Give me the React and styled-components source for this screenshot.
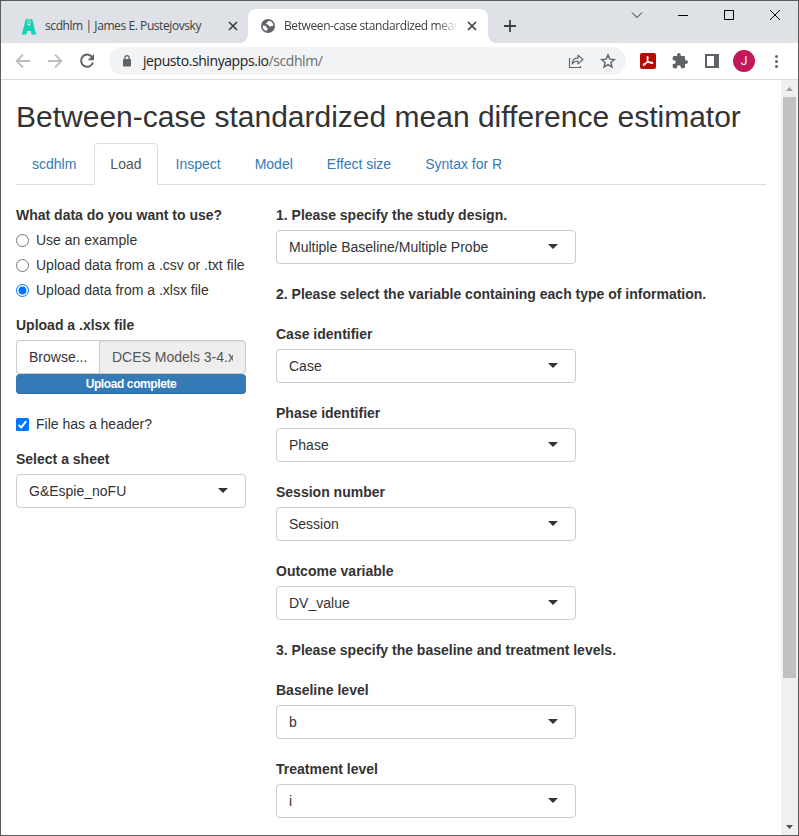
import React from 'react';
import styled, { createGlobalStyle } from 'styled-components';

const GlobalStyle = createGlobalStyle`
  *, *::before, *::after { box-sizing: border-box; }
  body { margin: 0; overflow: hidden; }
`;

const Window = styled.div`
  display: flex;
  flex-direction: column;
  width: 799px;
  height: 836px;
  border: 1px solid #5c5a5c;
  background: #fff;
  overflow: hidden;
  color: #333;
  font: 14px/20px "Liberation Sans", Arial, sans-serif;
`;

const Glyph = styled.svg`
  display: block;
  flex: none;
`;

/* Browser chrome */

const TabStrip = styled.div`
  display: flex;
  flex: none;
  height: 42px;
  background: #dee1e6;
`;

const BrowserTab = styled.div`
  position: relative;
  display: flex;
  align-items: center;
  width: ${(p) => (p.$active ? 240 : 247)}px;
  height: ${(p) => (p.$active ? 34 : 42)}px;
  margin-top: ${(p) => (p.$active ? 8 : 0)}px;
  padding: ${(p) => (p.$active ? '0 11px 0 13px' : '8px 10px 0 20px')};
  background: ${(p) => (p.$active ? '#fff' : 'transparent')};
  border-radius: 8px 8px 0 0;

  &::before, &::after {
    content: ${(p) => (p.$active ? '""' : 'none')};
    position: absolute;
    bottom: 0;
    width: 8px;
    height: 8px;
  }
  &::before {
    left: -8px;
    background: radial-gradient(circle at 0 0, transparent 7.5px, #fff 8px);
  }
  &::after {
    right: -8px;
    background: radial-gradient(circle at 100% 0, transparent 7.5px, #fff 8px);
  }
`;

const TabTitle = styled.span`
  width: ${(p) => p.$width}px;
  margin-left: ${(p) => p.$gap}px;
  margin-right: auto;
  overflow: hidden;
  white-space: nowrap;
  color: #3c4043;
  font: 12px/16px "Open Sans", "Noto Sans", sans-serif;
  letter-spacing: ${(p) => p.$tracking}px;
  mask-image: ${(p) => (p.$fade ? 'linear-gradient(90deg, #000 88%, transparent)' : 'none')};
`;

const NewTab = styled.div`
  padding: 19px 0 0 16px;
`;

const WindowControls = styled.div`
  display: flex;
  margin-left: auto;
`;

const WindowButton = styled.div`
  display: flex;
  justify-content: center;
  width: 46px;
  height: 28px;
  align-items: center;
`;

const Toolbar = styled.div`
  display: flex;
  align-items: center;
  flex: none;
  height: 37px;
  padding: 0 13px 0 14px;
  border-bottom: 1px solid #dadbdd;
`;

const NavButtons = styled.div`
  display: flex;
  gap: 16px;
  margin-right: 14px;
`;

const AddressBar = styled.div`
  display: flex;
  align-items: center;
  width: 517px;
  height: 28px;
  padding: 0 10px 0 13px;
  border-radius: 14px;
  background: #f1f3f4;
`;

const Url = styled.span`
  flex: 1;
  margin-left: 11px;
  color: #202124;
  white-space: nowrap;
  font: 14px/20px "Open Sans", "Noto Sans", sans-serif;
  letter-spacing: -0.42px;
`;

const UrlPath = styled.span`
  color: #6a6e72;
`;

const AddressActions = styled.div`
  display: flex;
  gap: 16px;
`;

const Extensions = styled.div`
  display: flex;
  align-items: center;
  gap: 16px;
  margin-left: 14px;
`;

const PdfBadge = styled.div`
  width: 16px;
  height: 16px;
  border-radius: 2px;
  background: #b30b00;
`;

const Avatar = styled.div`
  width: 22px;
  height: 22px;
  margin: 0 -3px;
  border-radius: 50%;
  background: #c2185b;
  color: #fff;
  text-align: center;
  font: 12px/22px Roboto, sans-serif;
`;

/* Page */

const Viewport = styled.div`
  display: flex;
  flex: 1;
  min-height: 0;
`;

const Page = styled.main`
  flex: 1;
  min-width: 0;
  padding: 20px 15px 0;
`;

const Title = styled.h2`
  margin: 0 0 10px;
  white-space: nowrap;
  font-size: 30px;
  font-weight: 400;
  line-height: 33px;
`;

const NavTabs = styled.nav`
  display: flex;
  gap: 2px;
  height: 42px;
  border-bottom: 1px solid #ddd;
`;

const NavTab = styled.a`
  height: 42px;
  padding: 10px 15px;
  border: 1px solid ${(p) => (p.$active ? '#ddd' : 'transparent')};
  border-bottom-color: ${(p) => (p.$active ? '#fff' : 'transparent')};
  border-radius: 4px 4px 0 0;
  color: ${(p) => (p.$active ? '#555' : '#337ab7')};
`;

const Columns = styled.div`
  display: grid;
  grid-template-columns: 230px 300px;
  column-gap: 30px;
  padding-top: 20px;
`;

const Sidebar = styled.div`
  display: flex;
  flex-direction: column;
  gap: 15px;
`;

const MainForm = styled.div`
  display: flex;
  flex-direction: column;
  gap: 20px;
`;

const Field = styled.div`
  display: flex;
  flex-direction: column;
  gap: 5px;
`;

const Label = styled.div`
  height: 20px;
  white-space: nowrap;
  font-weight: 700;
`;

const Choice = styled.label`
  display: flex;
  align-items: center;
  height: 20px;
  white-space: nowrap;
`;

const ChoiceMark = styled(Glyph)`
  margin: 1px 7px 0 0;
`;

const HeaderChoice = styled(Choice)`
  margin-top: 5px;
`;

const FileRow = styled.div`
  display: flex;
  height: 34px;
`;

const BrowseButton = styled.div`
  width: 83px;
  padding: 6px 12px;
  border: 1px solid #ccc;
  border-right-width: 0;
  border-radius: 4px 0 0 4px;
  white-space: nowrap;
`;

const FileName = styled.div`
  flex: 1;
  min-width: 0;
  padding: 6px 12px;
  border: 1px solid #ccc;
  border-radius: 0 4px 4px 0;
  background: #eee;
  box-shadow: inset 0 1px 1px rgba(0, 0, 0, 0.075);
  color: #555;
`;

const FileNameText = styled.div`
  overflow: hidden;
  white-space: nowrap;
`;

const Progress = styled.div`
  height: 20px;
  border-radius: 4px;
  background: #337ab7;
  box-shadow: inset 0 -1px 0 rgba(0, 0, 0, 0.15);
  color: #fff;
  text-align: center;
  font-size: 12px;
  font-weight: 700;
  letter-spacing: -0.4px;
`;

const SelectBox = styled.div`
  display: flex;
  align-items: center;
  justify-content: space-between;
  height: 34px;
  padding: 0 17px 0 12px;
  border: 1px solid #ccc;
  border-radius: 4px;
`;

const Caret = styled(Glyph)`
  margin-bottom: 2px;
`;

/* Scrollbar */

const Scrollbar = styled.div`
  display: flex;
  flex-direction: column;
  align-items: center;
  width: 17px;
  padding-right: 1px;
  background: #f0f0f0;
`;

const ScrollArrow = styled.div`
  display: flex;
  align-items: center;
  justify-content: center;
  height: 17px;
`;

const ScrollThumb = styled.div`
  width: 13px;
  height: 581px;
  margin-bottom: auto;
  background: #c1c1c1;
`;

const CloseIcon = () => (
  <Glyph width="10" height="10" viewBox="0 0 10 10" stroke="#3c4043" strokeWidth="1.7">
    <path d="M1 1l8 8M9 1L1 9" />
  </Glyph>
);

const SiteLogo = () => (
  <Glyph width="16" height="17" viewBox="0 0 16 17" fill="#12d3b4">
    <path d="M4.8 1h1.7v5.4L8 8l1.5-1.6V1h1.7l4 15.4h-4.6L9.7 13H6.3l-.9 3.4H.8z" />
    <path d="M7.3 1h1.4v5H7.3z" />
  </Glyph>
);

const GlobeIcon = () => (
  <Glyph width="14" height="14" viewBox="0 0 14 14">
    <circle cx="7" cy="7" r="7" fill="#5f6368" />
    <path
      fill="#fff"
      d="M7.8 1.7c-.2.8-.8 1.1-1.5 1.3-.5.2-.4.8-.9 1.2-.5.3-.6.8-.1 1.1.6.3 1.8 0 2.2.7.3.6 0 1 .7 1.3.8.4 1.5 0 2.3-.4.7-.3 1.5-.2 1.9.4a5.3 5.3 0 0 0-4.6-5.6zM1.7 6.6c.9-.1 2.4.1 3.2.7.7.5.5 1.4 1.2 1.6.7.2.9.7.6 1.3-.3.5-1 .6-1.1 1.2v.8A5.3 5.3 0 0 1 1.7 6.6z"
    />
  </Glyph>
);

const ArrowIcon = ({ forward }) => (
  <Glyph width="16" height="16" viewBox="0 0 16 16" fill="none" stroke="#babcbe" strokeWidth="1.9">
    <path d={forward ? 'M1 8h13M8 1.6L14.3 8 8 14.4' : 'M15 8H2M8 1.6L1.7 8 8 14.4'} />
  </Glyph>
);

const ReloadIcon = () => (
  <Glyph width="16" height="16" viewBox="0 0 16 16">
    <path d="M13.2 4.2A6.1 6.1 0 1 0 14 9.5" fill="none" stroke="#5f6368" strokeWidth="2" />
    <path d="M15 1v6.3H8.7z" fill="#5f6368" />
  </Glyph>
);

const LockIcon = () => (
  <Glyph width="10" height="13" viewBox="0 0 10 13">
    <rect x="1" y="4" width="8" height="7.5" rx="1" fill="#5f6368" />
    <path d="M2.9 4.5V2.7a2.1 2.1 0 0 1 4.2 0v1.8" fill="none" stroke="#5f6368" strokeWidth="1.2" />
  </Glyph>
);

const ShareIcon = () => (
  <Glyph width="16" height="16" viewBox="0 0 16 16" fill="none" stroke="#5f6368" strokeWidth="1.1">
    <path d="M1.5 5v9.5h11V13" />
    <path d="M4.2 10.9C4.4 7.3 6.6 5.2 10 4.9V2.1L15 6.5l-5 4.3V8c-2.5 0-4.3.8-5.8 2.9z" strokeLinejoin="round" />
  </Glyph>
);

const StarIcon = () => (
  <Glyph width="16" height="16" viewBox="0 0 16 16" fill="none" stroke="#5f6368" strokeWidth="1.4">
    <path d="M8 1.9l1.8 4.2 4.6.4-3.5 3 1.1 4.5L8 11.6 4 14l1.1-4.5-3.5-3 4.6-.4z" />
  </Glyph>
);

const AcrobatMark = () => (
  <Glyph width="16" height="16" viewBox="0 0 16 16" fill="none" stroke="#fff" strokeWidth="1.15">
    <path d="M3.4 12.1c-.7-.7.7-1.7 2.2-2.1 2-.6 4.3-1 6.2-.8 1.2.1 1.3 1.3.2 1.2-1.8-.2-4.2-2-4.7-4.6-.3-1.3-.2-2.3.3-2.3.8 0 .5 2-.1 3.7-.7 2.1-2.9 6-4.1 4.9z" />
  </Glyph>
);

const PuzzleIcon = () => (
  <Glyph width="16" height="16" viewBox="1 1 22 22" fill="#5f6368">
    <path d="M20.5 11H19V7c0-1.1-.9-2-2-2h-4V3.5a2.5 2.5 0 0 0-5 0V5H4c-1.1 0-2 .9-2 2v3.8h1.5a2.7 2.7 0 0 1 0 5.4H2V20c0 1.1.9 2 2 2h3.8v-1.5a2.7 2.7 0 0 1 5.4 0V22H17c1.1 0 2-.9 2-2v-4h1.5a2.5 2.5 0 0 0 0-5z" />
  </Glyph>
);

const SidePanelIcon = () => (
  <Glyph width="16" height="16" viewBox="0 0 16 16">
    <path d="M1 1h14v14H1zM3 3v10h7V3z" fill="#5f6368" fillRule="evenodd" />
  </Glyph>
);

const MenuIcon = () => (
  <Glyph width="16" height="16" viewBox="0 0 16 16" fill="#5f6368">
    <circle cx="8.5" cy="3.5" r="1.5" />
    <circle cx="8.5" cy="8.5" r="1.5" />
    <circle cx="8.5" cy="13.5" r="1.5" />
  </Glyph>
);

const RadioMark = ({ checked }) => (
  <ChoiceMark width="13" height="13" viewBox="0 0 13 13">
    <circle cx="6.5" cy="6.5" r="6" fill="#fff" stroke={checked ? '#0075ff' : '#767676'} />
    {checked && <circle cx="6.5" cy="6.5" r="4" fill="#0075ff" />}
  </ChoiceMark>
);

const CheckMark = () => (
  <ChoiceMark width="13" height="13" viewBox="0 0 13 13">
    <rect width="13" height="13" rx="1.5" fill="#0075ff" />
    <path d="M2.6 6.9l2.6 2.6 5-6.3" fill="none" stroke="#fff" strokeWidth="2" />
  </ChoiceMark>
);

const Select = ({ label, value }) => (
  <Field>
    <Label>{label}</Label>
    <SelectBox>
      {value}
      <Caret width="10" height="5" viewBox="0 0 10 5" fill="#333">
        <path d="M0 0h10L5 5z" />
      </Caret>
    </SelectBox>
  </Field>
);

const pageTabs = ['scdhlm', 'Load', 'Inspect', 'Model', 'Effect size', 'Syntax for R'];
const sources = ['Use an example', 'Upload data from a .csv or .txt file', 'Upload data from a .xlsx file'];
const variables = [
  ['Case identifier', 'Case'],
  ['Phase identifier', 'Phase'],
  ['Session number', 'Session'],
  ['Outcome variable', 'DV_value'],
];

export default function App() {
  return (
    <Window>
      <GlobalStyle />
      <TabStrip>
        <BrowserTab>
          <SiteLogo />
          <TabTitle $width={170} $gap={8} $tracking={-0.42}>scdhlm | James E. Pustejovsky</TabTitle>
          <CloseIcon />
        </BrowserTab>
        <BrowserTab $active>
          <GlobeIcon />
          <TabTitle $width={174} $gap={9} $tracking={-0.4} $fade>Between-case standardized mean difference</TabTitle>
          <CloseIcon />
        </BrowserTab>
        <NewTab>
          <Glyph width="12" height="12" viewBox="0 0 12 12" stroke="#3c4043" strokeWidth="1.8">
            <path d="M6 0v12M0 6h12" />
          </Glyph>
        </NewTab>
        <WindowControls>
          <WindowButton>
            <Glyph width="12" height="8" viewBox="0 0 12 8" fill="none" stroke="#222">
              <path d="M1 1.5l5 5 5-5" />
            </Glyph>
          </WindowButton>
          <WindowButton>
            <Glyph width="10" height="2" viewBox="0 0 10 2">
              <path d="M0 1h10v1H0z" />
            </Glyph>
          </WindowButton>
          <WindowButton>
            <Glyph width="10" height="10" viewBox="0 0 10 10" fill="none" stroke="#000">
              <path d="M.5.5h9v9h-9z" />
            </Glyph>
          </WindowButton>
          <WindowButton>
            <Glyph width="10" height="10" viewBox="0 0 10 10" stroke="#000">
              <path d="M0 0l10 10M10 0L0 10" />
            </Glyph>
          </WindowButton>
        </WindowControls>
      </TabStrip>

      <Toolbar>
        <NavButtons>
          <ArrowIcon />
          <ArrowIcon forward />
          <ReloadIcon />
        </NavButtons>
        <AddressBar>
          <LockIcon />
          <Url>jepusto.shinyapps.io<UrlPath>/scdhlm/</UrlPath></Url>
          <AddressActions>
            <ShareIcon />
            <StarIcon />
          </AddressActions>
        </AddressBar>
        <Extensions>
          <PdfBadge><AcrobatMark /></PdfBadge>
          <PuzzleIcon />
          <SidePanelIcon />
          <Avatar>J</Avatar>
          <MenuIcon />
        </Extensions>
      </Toolbar>

      <Viewport>
        <Page>
          <Title>Between-case standardized mean difference estimator</Title>
          <NavTabs>
            {pageTabs.map((t) => <NavTab key={t} $active={t === 'Load'}>{t}</NavTab>)}
          </NavTabs>
          <Columns>
            <Sidebar>
              <Field>
                <Label>What data do you want to use?</Label>
                {sources.map((s, i) => (
                  <Choice key={s}><RadioMark checked={i === 2} />{s}</Choice>
                ))}
              </Field>
              <Field>
                <Label>Upload a .xlsx file</Label>
                <div>
                  <FileRow>
                    <BrowseButton>Browse...</BrowseButton>
                    <FileName><FileNameText>DCES Models 3-4.xlsx</FileNameText></FileName>
                  </FileRow>
                  <Progress>Upload complete</Progress>
                </div>
              </Field>
              <HeaderChoice><CheckMark />File has a header?</HeaderChoice>
              <Select label="Select a sheet" value="G&amp;Espie_noFU" />
            </Sidebar>
            <MainForm>
              <Select label="1. Please specify the study design." value="Multiple Baseline/Multiple Probe" />
              <Label>2. Please select the variable containing each type of information.</Label>
              {variables.map(([label, value]) => <Select key={label} label={label} value={value} />)}
              <Label>3. Please specify the baseline and treatment levels.</Label>
              <Select label="Baseline level" value="b" />
              <Select label="Treatment level" value="i" />
            </MainForm>
          </Columns>
        </Page>
        <Scrollbar>
          <ScrollArrow>
            <Glyph width="7" height="4" viewBox="0 0 7 4" fill="#a3a3a3"><path d="M0 4h7L3.5 0z" /></Glyph>
          </ScrollArrow>
          <ScrollThumb />
          <ScrollArrow>
            <Glyph width="7" height="4" viewBox="0 0 7 4" fill="#505050"><path d="M0 0h7L3.5 4z" /></Glyph>
          </ScrollArrow>
        </Scrollbar>
      </Viewport>
    </Window>
  );
}
